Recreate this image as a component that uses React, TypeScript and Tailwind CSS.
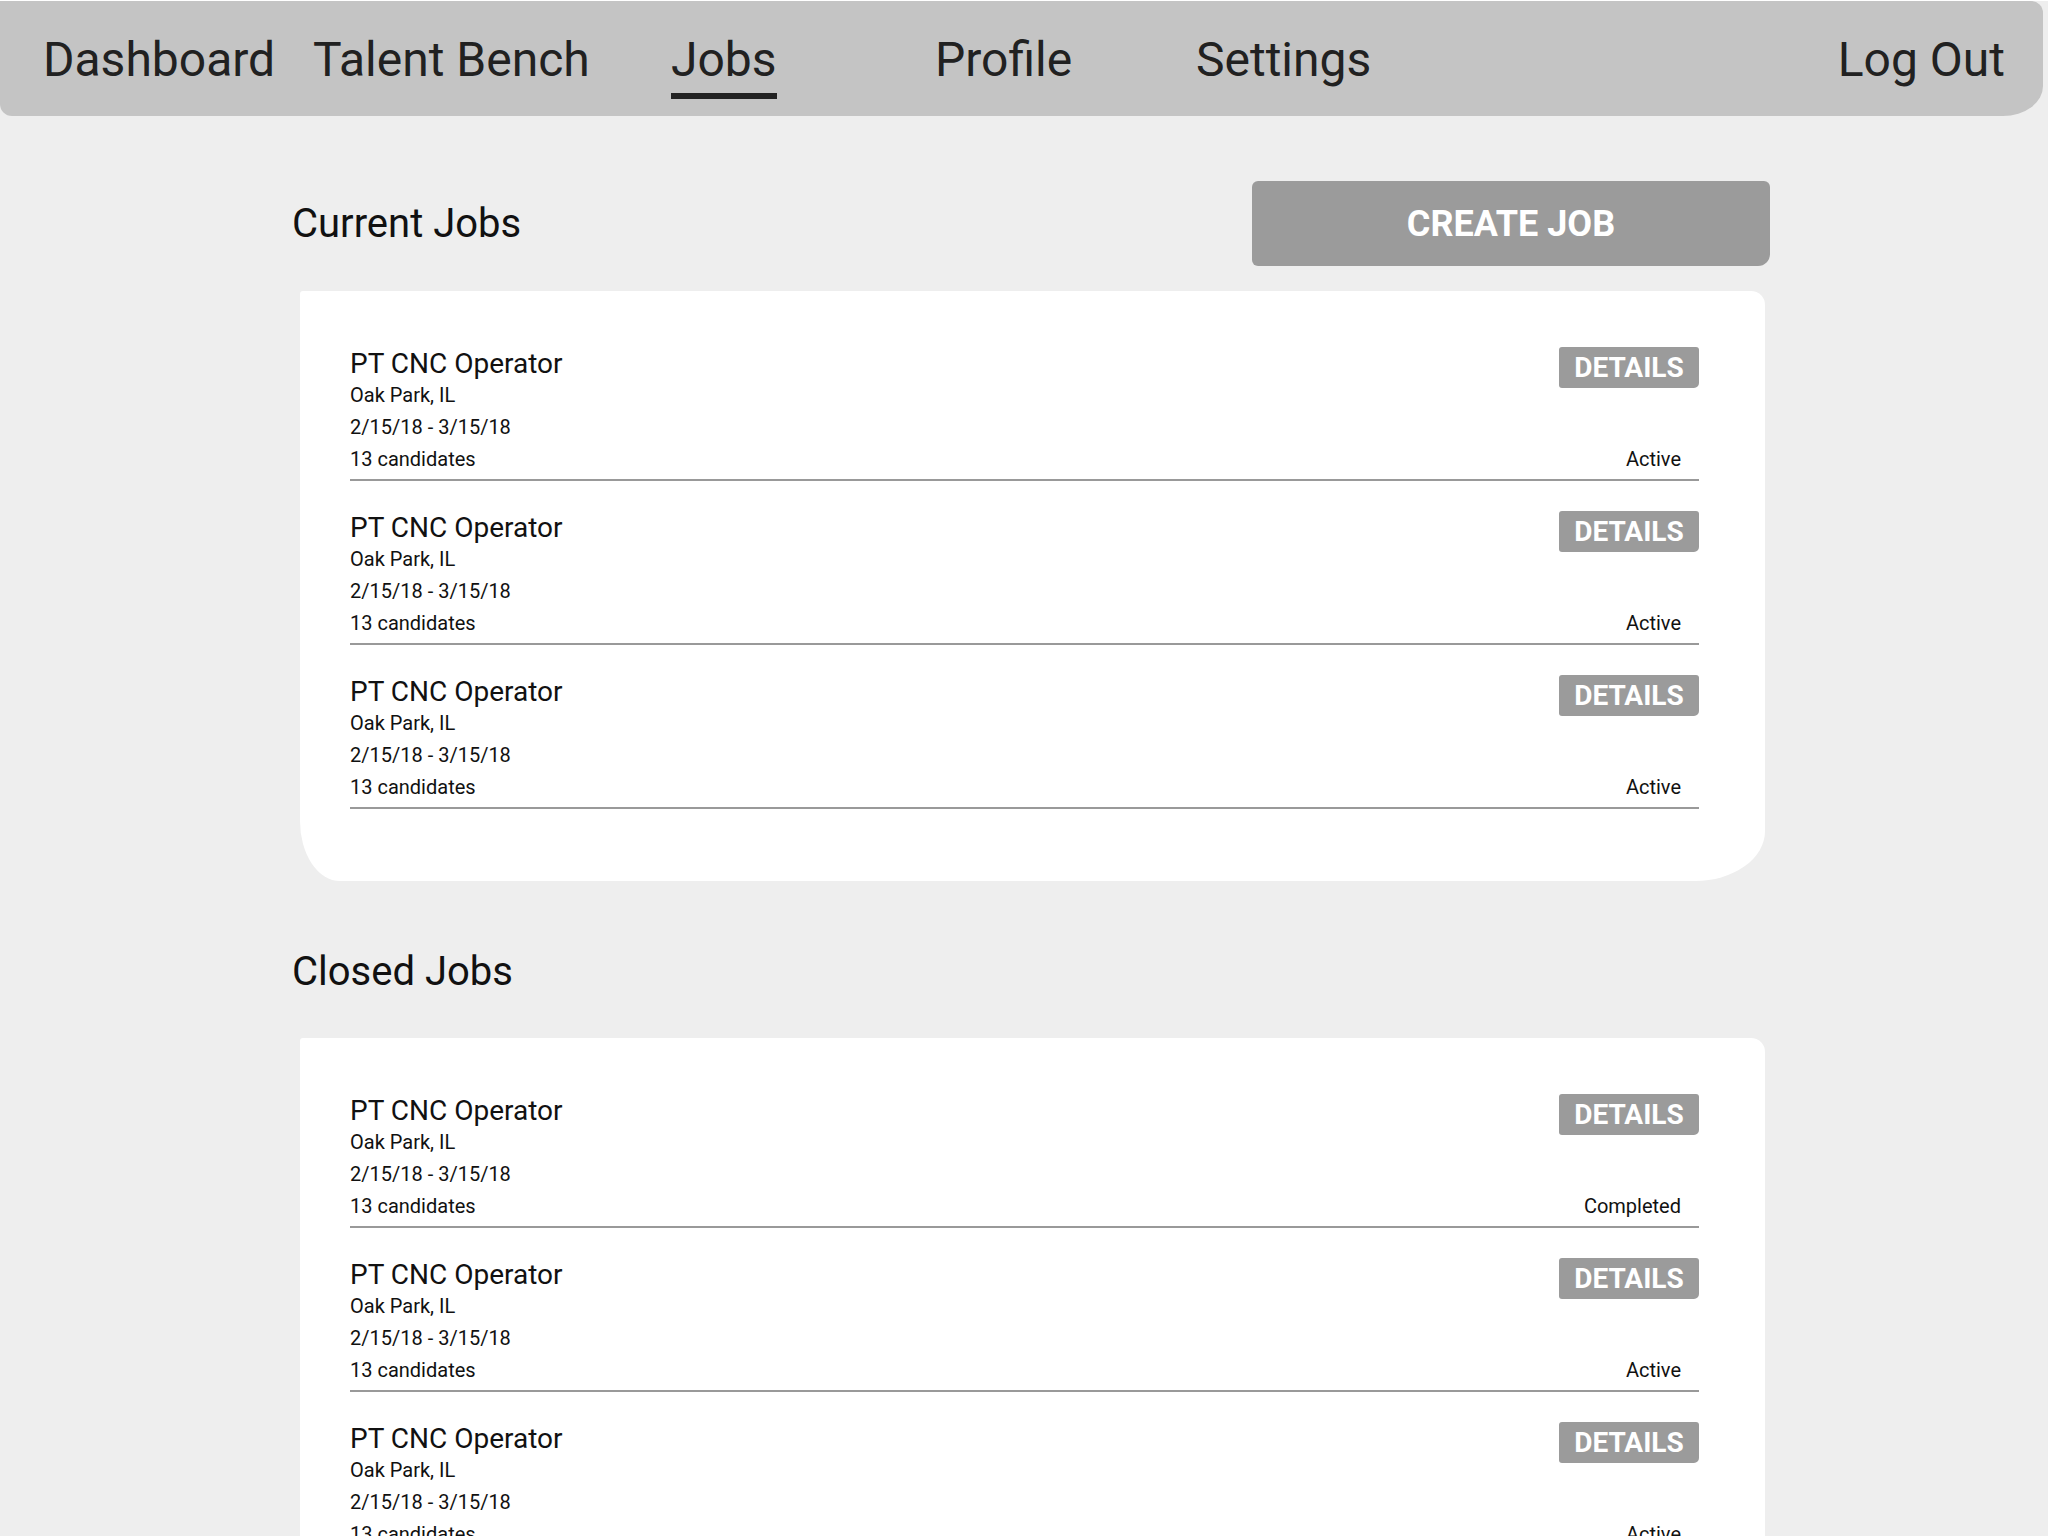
import React from 'react'

const navItems = [
  { label: 'Dashboard', width: 'w-[270px]' },
  { label: 'Talent Bench', width: 'w-[358px]' },
  { label: 'Jobs', width: 'w-[264px]', active: true },
  { label: 'Profile', width: 'w-[261px]' },
  { label: 'Settings', width: 'w-[260px]' },
]

function JobRow({ status }: { status: string }) {
  return (
    <div className="flex flex-col">
      <div className="flex justify-between">
        <div className="flex flex-col text-[#111]">
          <div className="text-[28px] leading-[30px]">PT CNC Operator</div>
          <div className="text-[20px] leading-[32px]">Oak Park, IL</div>
          <div className="text-[20px] leading-[32px]">2/15/18 - 3/15/18</div>
          <div className="text-[20px] leading-[32px]">13 candidates</div>
        </div>
        <div className="flex flex-col items-end justify-between">
          <button
            type="button"
            className="-mt-[2px] h-[41px] w-[140px] rounded-[3px] rounded-br-[5px] bg-[#9b9b9b] text-[28px] font-bold leading-[41px] text-white"
          >
            DETAILS
          </button>
          <div className="pr-[18px] text-[20px] leading-[32px] text-[#111]">{status}</div>
        </div>
      </div>
      <div className="mt-[4px] h-[2px] bg-[#999999]" />
    </div>
  )
}

function JobCard({ statuses }: { statuses: string[] }) {
  return (
    <div className="ml-[8px] mr-[5px] flex flex-col gap-[32px] rounded-tl-[3px] rounded-tr-[14px] rounded-br-[70px_50px] rounded-bl-[40px_60px] bg-white pb-[72px] pl-[50px] pr-[66px] pt-[58px]">
      {statuses.map((s, i) => (
        <JobRow key={i} status={s} />
      ))}
    </div>
  )
}

export default function App() {
  return (
    <div className="min-h-screen bg-[#eeeeee] pb-[80px] font-['Roboto',sans-serif]">
      <nav className="mr-[5px] mt-[1px] flex h-[115px] items-center rounded-bl-[12px] rounded-br-[40px_30px] rounded-tr-[12px] bg-[#c4c4c4] pl-[43px] pr-[38px] pt-[3px] text-[48px] leading-[56px] text-[#212121]">
        {navItems.map(item => (
          <div key={item.label} className={item.width}>
            <span className="relative">
              {item.label}
              {item.active && (
                <span className="absolute left-0 right-0 top-[62px] h-[6px] bg-[#222222]" />
              )}
            </span>
          </div>
        ))}
        <div className="ml-auto">Log Out</div>
      </nav>

      <main className="ml-[292px] w-[1478px]">
        <div className="mt-[65px] flex h-[85px] items-center justify-between">
          <h1 className="text-[40px] leading-[48px] text-[#111]">Current Jobs</h1>
          <button
            type="button"
            className="h-[85px] w-[518px] rounded-[6px] rounded-br-[12px] bg-[#9b9b9b] text-[36px] font-bold text-white"
          >
            CREATE JOB
          </button>
        </div>

        <div className="mt-[25px]">
          <JobCard statuses={['Active', 'Active', 'Active']} />
        </div>

        <h2 className="mt-[67px] text-[40px] leading-[48px] text-[#111]">Closed Jobs</h2>

        <div className="mt-[42px]">
          <JobCard statuses={['Completed', 'Active', 'Active']} />
        </div>
      </main>
    </div>
  )
}
